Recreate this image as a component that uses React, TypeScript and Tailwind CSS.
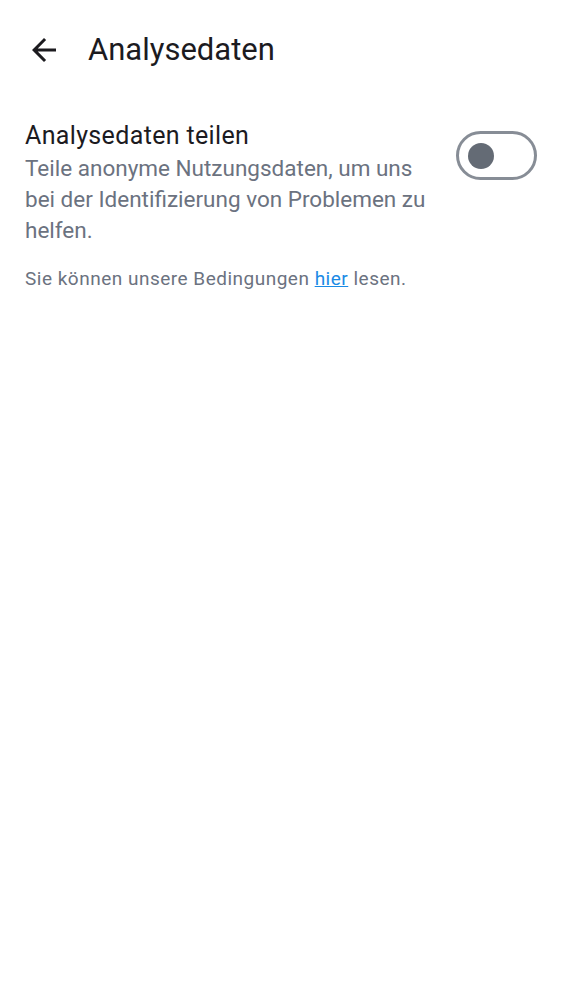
import React from "react";

export default function App() {
  return (
    <div className="min-h-[1000px] w-[562px] bg-white" style={{ fontFamily: "Roboto, sans-serif" }}>
      <div className="flex items-center h-[100px] pl-[26px]">
        <svg width="36" height="36" viewBox="0 0 24 24" fill="#1c1b1f">
          <path d="M20 11H7.83l5.59-5.59L12 4l-8 8 8 8 1.41-1.41L7.83 13H20v-2z" />
        </svg>
        <h1 className="ml-[26px] text-[31px] text-[#1c1b1f] font-normal">Analysedaten</h1>
      </div>
      <div className="flex justify-between px-[25px] pt-[20px]">
        <div className="w-[415px]">
          <div className="text-[25px] leading-[31px] text-[#1c1b1f] tracking-[0.35px]">Analysedaten teilen</div>
          <div className="text-[22.5px] leading-[31px] text-[#6b7280] mt-[2px]">
            Teile anonyme Nutzungsdaten, um uns bei der Identifizierung von Problemen zu helfen.
          </div>
        </div>
        <div className="pt-[11px]">
          <div className="w-[81px] h-[49px] rounded-full border-[3px] border-[#878d96] flex items-center pl-[9px]">
            <div className="w-[26px] h-[26px] rounded-full bg-[#646b75]" />
          </div>
        </div>
      </div>
      <div className="px-[25px] mt-[20px] text-[19px] leading-[26px] text-[#6b7280] tracking-[0.5px]">
        Sie können unsere Bedingungen <a className="text-[#1a8ae5] underline">hier</a> lesen.
      </div>
    </div>
  );
}
